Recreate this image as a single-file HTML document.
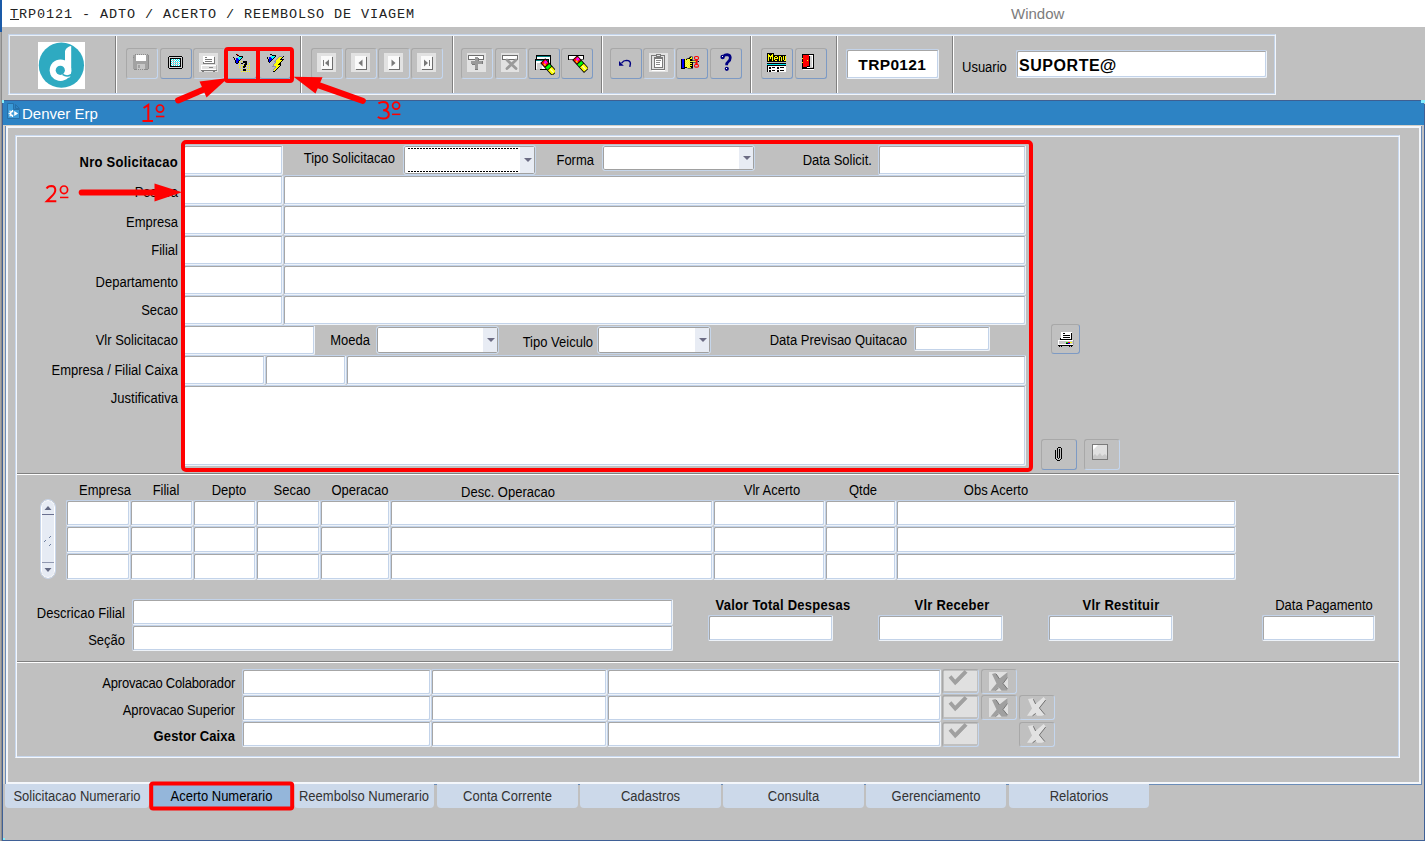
<!DOCTYPE html><html><head><meta charset="utf-8"><style>
*{margin:0;padding:0}
html,body{width:1425px;height:841px;overflow:hidden;background:#c0c0c0;position:relative;font-family:'Liberation Sans',sans-serif}
.t{position:absolute;white-space:nowrap}
.f{position:absolute;box-sizing:border-box;background:#fff;border:1px solid;border-color:#c3d3e9 #eef3f9 #eef3f9 #c3d3e9;box-shadow:inset 1px 1px 0 #a6a6a6,inset -1px -1px 0 #c3d3e9;border-radius:2px}
.cb{position:absolute;box-sizing:border-box;background:#fff;border:1px solid #c6d6ea;box-shadow:inset 0 0 0 1px #a0a0a0;border-radius:3px}
.cb .dd{position:absolute;right:1px;top:1px;bottom:1px;width:14px;background:#e8ecf4}
.cb .ar{position:absolute;left:4px;top:50%;margin-top:-2px;width:0;height:0;border-left:4px solid transparent;border-right:4px solid transparent;border-top:4px solid #6c6c84}
.cb .fc{position:absolute;left:4px;right:16px;top:2px;bottom:2px;background:repeating-linear-gradient(90deg,#000 0 2px,transparent 2px 3px) top/100% 1px no-repeat,repeating-linear-gradient(90deg,#000 0 2px,transparent 2px 3px) bottom/100% 1px no-repeat}
.tb{position:absolute;box-sizing:border-box;width:32px;height:31px;top:48px;border:1px solid;border-color:#a8a8a8 #c4d6ee #c4d6ee #a8a8a8;border-radius:3px}
.tb.en{border-color:#a8a8a8 #7d9ac4 #7d9ac4 #a8a8a8}
.sep{position:absolute;top:36px;height:57px;width:1px;background:#808080;border-right:1px solid #fff}
.tab{position:absolute;top:784px;height:24px;box-sizing:border-box;background:#ccd9ea;border-radius:0 0 4px 4px;color:#333;font-size:13px;line-height:13px;text-align:center}
.sb{position:absolute;box-sizing:border-box;border:1px solid;border-color:#a8a8a8 #c4d6ee #c4d6ee #a8a8a8;border-radius:3px}
</style></head><body><div style="position:absolute;left:0px;top:0px;width:1425px;height:27px;background:#fff"></div>
<div style="position:absolute;left:0px;top:0px;width:2px;height:32px;background:#1a5aa8"></div>
<div class="t" style="left:10px;top:8px;font-size:13.5px;line-height:13.5px;font-weight:normal;color:#222;font-family:'Liberation Mono',monospace;letter-spacing:0.9px"><span style="text-decoration:underline">T</span>RP0121 - ADTO / ACERTO / REEMBOLSO DE VIAGEM</div>
<div class="t" style="left:1011px;top:6px;font-size:15px;line-height:15px;font-weight:normal;color:#7c7c7c;font-family:'Liberation Sans',sans-serif;">Window</div>
<div style="position:absolute;left:0px;top:32px;width:1px;height:809px;background:#a8a8a8"></div>
<div style="position:absolute;left:1px;top:32px;width:1px;height:809px;background:#8c8c8c"></div>
<div style="position:absolute;left:8px;top:34px;width:1268px;height:61px;box-sizing:border-box;border:1px solid;border-color:#c3d3e9 #f2f6fb #f2f6fb #c3d3e9;box-shadow:inset 1px 1px 0 #eaf0f7,inset -1px -1px 0 #c3d3e9"></div>
<div class="sep" style="left:115px"></div>
<div class="sep" style="left:300px"></div>
<div class="sep" style="left:452px"></div>
<div class="sep" style="left:601px"></div>
<div class="sep" style="left:750px"></div>
<div class="sep" style="left:836px"></div>
<div class="sep" style="left:952px"></div>
<div style="position:absolute;left:38px;top:42px;width:47px;height:47px;background:#fff"></div>
<svg style="position:absolute;left:38px;top:42px" width="47" height="47" viewBox="0 0 47 47">
<circle cx="23.4" cy="23.2" r="22.6" fill="#2eaac1"/>
<circle cx="22.5" cy="28.2" r="10.8" fill="#fff"/>
<path d="M27,33 L27,9 Q28.5,4.8 33.2,4 L33.2,30 Q33.2,34 31,36 L27,33 Z" fill="#fff"/>
<circle cx="22.3" cy="28.3" r="4.6" fill="#2eaac1"/>
<path d="M24.5,32.4 Q29,35.5 33.5,32.5" stroke="#2eaac1" stroke-width="1.6" fill="none"/>
</svg>
<div class="tb" style="left:126px"></div>
<div class="tb en" style="left:160px"></div>
<div class="tb" style="left:193px"></div>
<div class="tb en" style="left:225px"></div>
<div class="tb en" style="left:259px"></div>
<div class="tb" style="left:311px"></div>
<div class="tb" style="left:345px"></div>
<div class="tb" style="left:378px"></div>
<div class="tb" style="left:411px"></div>
<div class="tb" style="left:461px"></div>
<div class="tb" style="left:495px"></div>
<div class="tb en" style="left:528px"></div>
<div class="tb en" style="left:561px"></div>
<div class="tb en" style="left:610px"></div>
<div class="tb" style="left:643px"></div>
<div class="tb en" style="left:676px"></div>
<div class="tb en" style="left:710px"></div>
<div class="tb en" style="left:761px"></div>
<div class="tb en" style="left:795px"></div>
<svg style="position:absolute;left:133px;top:54px" width="16" height="16" viewBox="0 0 16 16" shape-rendering="crispEdges"><rect x="0" y="1" width="16" height="14" fill="#a2a2a2"/><rect x="1" y="0" width="14" height="1" fill="#c0c0c0"/><rect x="2" y="0" width="1" height="1" fill="#8c8c8c"/><rect x="4" y="0" width="1" height="1" fill="#8c8c8c"/><rect x="6" y="0" width="1" height="1" fill="#8c8c8c"/><rect x="8" y="0" width="1" height="1" fill="#8c8c8c"/><rect x="10" y="0" width="1" height="1" fill="#8c8c8c"/><rect x="12" y="0" width="1" height="1" fill="#8c8c8c"/><rect x="14" y="0" width="1" height="1" fill="#8c8c8c"/><rect x="3" y="1" width="10" height="6" fill="#ffffff"/><rect x="15" y="1" width="1" height="14" fill="#8c8c8c"/><rect x="4" y="10" width="8" height="5" fill="#c6c6c6"/><rect x="5" y="11" width="2" height="3" fill="#a2a2a2"/><rect x="1" y="15" width="3" height="1" fill="#8c8c8c"/><rect x="5" y="15" width="1" height="1" fill="#8c8c8c"/><rect x="7" y="15" width="1" height="1" fill="#8c8c8c"/><rect x="9" y="15" width="1" height="1" fill="#8c8c8c"/><rect x="11" y="15" width="4" height="1" fill="#8c8c8c"/><rect x="0" y="3" width="1" height="1" fill="#8c8c8c"/></svg>
<svg style="position:absolute;left:168px;top:56px" width="15" height="13" viewBox="0 0 15 13" shape-rendering="crispEdges"><rect x="1" y="0" width="13" height="1" fill="#000"/><rect x="1" y="12" width="13" height="1" fill="#000"/><rect x="0" y="1" width="1" height="11" fill="#000"/><rect x="14" y="1" width="1" height="11" fill="#000"/><rect x="1" y="1" width="13" height="11" fill="#d4d4d4"/><rect x="2" y="2" width="11" height="9" fill="#000"/><rect x="3" y="3" width="9" height="7" fill="#ffffff"/><rect x="3" y="3" width="1" height="1" fill="#00e8f0"/><rect x="5" y="3" width="1" height="1" fill="#00e8f0"/><rect x="7" y="3" width="1" height="1" fill="#00e8f0"/><rect x="9" y="3" width="1" height="1" fill="#00e8f0"/><rect x="11" y="3" width="1" height="1" fill="#00e8f0"/><rect x="4" y="4" width="1" height="1" fill="#00e8f0"/><rect x="6" y="4" width="1" height="1" fill="#00e8f0"/><rect x="8" y="4" width="1" height="1" fill="#00e8f0"/><rect x="10" y="4" width="1" height="1" fill="#00e8f0"/><rect x="3" y="5" width="1" height="1" fill="#00e8f0"/><rect x="5" y="5" width="1" height="1" fill="#00e8f0"/><rect x="7" y="5" width="1" height="1" fill="#00e8f0"/><rect x="9" y="5" width="1" height="1" fill="#00e8f0"/><rect x="11" y="5" width="1" height="1" fill="#00e8f0"/><rect x="4" y="6" width="1" height="1" fill="#00e8f0"/><rect x="6" y="6" width="1" height="1" fill="#00e8f0"/><rect x="8" y="6" width="1" height="1" fill="#00e8f0"/><rect x="10" y="6" width="1" height="1" fill="#00e8f0"/><rect x="3" y="7" width="1" height="1" fill="#00e8f0"/><rect x="5" y="7" width="1" height="1" fill="#00e8f0"/><rect x="7" y="7" width="1" height="1" fill="#00e8f0"/><rect x="9" y="7" width="1" height="1" fill="#00e8f0"/><rect x="11" y="7" width="1" height="1" fill="#00e8f0"/><rect x="4" y="8" width="1" height="1" fill="#00e8f0"/><rect x="6" y="8" width="1" height="1" fill="#00e8f0"/><rect x="8" y="8" width="1" height="1" fill="#00e8f0"/><rect x="10" y="8" width="1" height="1" fill="#00e8f0"/><rect x="3" y="9" width="1" height="1" fill="#00e8f0"/><rect x="5" y="9" width="1" height="1" fill="#00e8f0"/><rect x="7" y="9" width="1" height="1" fill="#00e8f0"/><rect x="9" y="9" width="1" height="1" fill="#00e8f0"/><rect x="11" y="9" width="1" height="1" fill="#00e8f0"/><rect x="4" y="4" width="3" height="1" fill="#c8c8c8"/><rect x="4" y="6" width="7" height="1" fill="#c8c8c8"/><rect x="4" y="8" width="7" height="1" fill="#c8c8c8"/></svg>
<svg style="position:absolute;left:199px;top:53px" width="19" height="19" viewBox="0 0 19 19" shape-rendering="crispEdges"><rect x="0" y="0" width="19" height="19" fill="#e0e0e0"/><rect x="4" y="3" width="11" height="7" fill="#ffffff"/><rect x="6" y="4" width="2" height="1" fill="#7a7a7a"/><rect x="6" y="6" width="7" height="1" fill="#7a7a7a"/><rect x="6" y="8" width="7" height="1" fill="#7a7a7a"/><rect x="15" y="4" width="1" height="7" fill="#7a7a7a"/><rect x="4" y="10" width="12" height="1" fill="#7a7a7a"/><rect x="4" y="9" width="1" height="1" fill="#7a7a7a"/><rect x="2" y="12" width="16" height="5" fill="#ffffff"/><rect x="3" y="13" width="14" height="3" fill="#e2e2e2"/><rect x="10" y="14" width="4" height="1" fill="#8a8a8a"/><rect x="17" y="12" width="1" height="5" fill="#bdbdbd"/><rect x="2" y="17" width="16" height="1" fill="#7a7a7a"/><rect x="3" y="18" width="2" height="1" fill="#7a7a7a"/><rect x="14" y="18" width="2" height="1" fill="#7a7a7a"/></svg>
<svg style="position:absolute;left:229px;top:52px" width="24" height="24" viewBox="0 0 24 24" shape-rendering="crispEdges"><rect x="7" y="2" width="1" height="1" fill="#000000"/><rect x="8" y="2" width="1" height="1" fill="#ff0000"/><rect x="8" y="3" width="2" height="1" fill="#000000"/><rect x="10" y="4" width="4" height="1" fill="#000000"/><rect x="4" y="5" width="1" height="1" fill="#000000"/><rect x="9" y="5" width="4" height="1" fill="#00ffff"/><rect x="13" y="5" width="1" height="1" fill="#000000"/><rect x="5" y="6" width="1" height="1" fill="#000000"/><rect x="7" y="6" width="2" height="1" fill="#0000ff"/><rect x="9" y="6" width="3" height="1" fill="#00ffff"/><rect x="12" y="6" width="1" height="1" fill="#000000"/><rect x="5" y="7" width="1" height="1" fill="#000000"/><rect x="7" y="7" width="3" height="1" fill="#0000ff"/><rect x="10" y="7" width="1" height="1" fill="#00ffff"/><rect x="11" y="7" width="1" height="1" fill="#000000"/><rect x="6" y="8" width="1" height="1" fill="#000000"/><rect x="7" y="8" width="3" height="1" fill="#0000ff"/><rect x="10" y="8" width="1" height="1" fill="#000000"/><rect x="6" y="9" width="1" height="1" fill="#000000"/><rect x="7" y="9" width="2" height="1" fill="#0000ff"/><rect x="9" y="9" width="1" height="1" fill="#000000"/><rect x="6" y="10" width="1" height="1" fill="#000000"/><rect x="7" y="10" width="2" height="1" fill="#0000ff"/><rect x="9" y="10" width="1" height="1" fill="#000000"/><rect x="7" y="11" width="2" height="1" fill="#000000"/><rect x="14" y="9" width="4" height="1" fill="#000000"/><rect x="14" y="10" width="4" height="1" fill="#000000"/><rect x="12" y="11" width="2" height="1" fill="#000000"/><rect x="16" y="11" width="2" height="1" fill="#000000"/><rect x="15" y="12" width="3" height="1" fill="#000000"/><rect x="15" y="13" width="2" height="1" fill="#000000"/><rect x="14" y="14" width="3" height="1" fill="#000000"/><rect x="14" y="15" width="2" height="1" fill="#000000"/><rect x="14" y="17" width="3" height="1" fill="#000000"/><rect x="14" y="18" width="3" height="1" fill="#000000"/><rect x="10" y="9" width="1" height="1" fill="#ffff00"/><rect x="12" y="9" width="1" height="1" fill="#ffff00"/><rect x="10" y="11" width="1" height="1" fill="#ffff00"/><rect x="20" y="11" width="1" height="1" fill="#ffff00"/><rect x="10" y="13" width="1" height="1" fill="#ffff00"/><rect x="12" y="13" width="1" height="1" fill="#ffff00"/><rect x="14" y="13" width="1" height="1" fill="#ffff00"/><rect x="18" y="13" width="1" height="1" fill="#ffff00"/><rect x="20" y="13" width="1" height="1" fill="#ffff00"/><rect x="10" y="15" width="1" height="1" fill="#ffff00"/><rect x="12" y="15" width="1" height="1" fill="#ffff00"/><rect x="18" y="15" width="1" height="1" fill="#ffff00"/><rect x="20" y="15" width="1" height="1" fill="#ffff00"/><rect x="12" y="17" width="1" height="1" fill="#ffff00"/><rect x="18" y="17" width="1" height="1" fill="#ffff00"/><rect x="20" y="17" width="1" height="1" fill="#ffff00"/><rect x="12" y="19" width="1" height="1" fill="#ffff00"/><rect x="14" y="19" width="1" height="1" fill="#ffff00"/><rect x="16" y="19" width="1" height="1" fill="#ffff00"/><rect x="18" y="19" width="1" height="1" fill="#ffff00"/><rect x="20" y="19" width="1" height="1" fill="#ffff00"/></svg>
<svg style="position:absolute;left:263px;top:52px" width="24" height="24" viewBox="0 0 24 24" shape-rendering="crispEdges"><rect x="7" y="2" width="2" height="1" fill="#000000"/><rect x="9" y="3" width="4" height="1" fill="#000000"/><rect x="8" y="4" width="4" height="1" fill="#00ffff"/><rect x="12" y="4" width="1" height="1" fill="#000000"/><rect x="4" y="5" width="1" height="1" fill="#000000"/><rect x="6" y="5" width="2" height="1" fill="#0000ff"/><rect x="8" y="5" width="3" height="1" fill="#00ffff"/><rect x="11" y="5" width="1" height="1" fill="#000000"/><rect x="4" y="6" width="1" height="1" fill="#000000"/><rect x="6" y="6" width="3" height="1" fill="#0000ff"/><rect x="9" y="6" width="1" height="1" fill="#00ffff"/><rect x="10" y="6" width="1" height="1" fill="#000000"/><rect x="5" y="7" width="1" height="1" fill="#000000"/><rect x="6" y="7" width="3" height="1" fill="#0000ff"/><rect x="9" y="7" width="1" height="1" fill="#000000"/><rect x="5" y="8" width="1" height="1" fill="#000000"/><rect x="6" y="8" width="2" height="1" fill="#0000ff"/><rect x="8" y="8" width="1" height="1" fill="#000000"/><rect x="5" y="9" width="1" height="1" fill="#000000"/><rect x="6" y="9" width="1" height="1" fill="#0000ff"/><rect x="7" y="9" width="1" height="1" fill="#000000"/><rect x="6" y="10" width="1" height="1" fill="#000000"/><rect x="16" y="4" width="3" height="1" fill="#9090b0"/><rect x="15" y="5" width="1" height="1" fill="#9090b0"/><rect x="14" y="6" width="1" height="1" fill="#9090b0"/><rect x="13" y="7" width="1" height="1" fill="#9090b0"/><rect x="12" y="8" width="1" height="1" fill="#9090b0"/><rect x="11" y="9" width="4" height="1" fill="#9090b0"/><rect x="12" y="10" width="1" height="1" fill="#9090b0"/><rect x="11" y="11" width="1" height="1" fill="#9090b0"/><rect x="10" y="12" width="1" height="1" fill="#9090b0"/><rect x="10" y="13" width="1" height="1" fill="#9090b0"/><rect x="9" y="14" width="5" height="1" fill="#9090b0"/><rect x="12" y="15" width="1" height="1" fill="#9090b0"/><rect x="11" y="16" width="1" height="1" fill="#9090b0"/><rect x="10" y="17" width="1" height="1" fill="#9090b0"/><rect x="20" y="4" width="1" height="1" fill="#000000"/><rect x="16" y="5" width="3" height="1" fill="#ffff00"/><rect x="19" y="5" width="1" height="1" fill="#000000"/><rect x="15" y="6" width="3" height="1" fill="#ffff00"/><rect x="18" y="6" width="1" height="1" fill="#000000"/><rect x="14" y="7" width="3" height="1" fill="#ffff00"/><rect x="17" y="7" width="4" height="1" fill="#000000"/><rect x="13" y="8" width="6" height="1" fill="#ffff00"/><rect x="19" y="8" width="1" height="1" fill="#000000"/><rect x="13" y="9" width="5" height="1" fill="#ffff00"/><rect x="18" y="9" width="1" height="1" fill="#000000"/><rect x="13" y="10" width="4" height="1" fill="#ffff00"/><rect x="17" y="10" width="1" height="1" fill="#000000"/><rect x="12" y="11" width="4" height="1" fill="#ffff00"/><rect x="16" y="11" width="2" height="1" fill="#000000"/><rect x="11" y="12" width="4" height="1" fill="#ffff00"/><rect x="15" y="12" width="3" height="1" fill="#000000"/><rect x="11" y="13" width="6" height="1" fill="#ffff00"/><rect x="17" y="13" width="1" height="1" fill="#000000"/><rect x="13" y="14" width="3" height="1" fill="#ffff00"/><rect x="16" y="14" width="1" height="1" fill="#000000"/><rect x="13" y="15" width="2" height="1" fill="#ffff00"/><rect x="15" y="15" width="1" height="1" fill="#000000"/><rect x="12" y="16" width="2" height="1" fill="#ffff00"/><rect x="14" y="16" width="1" height="1" fill="#000000"/><rect x="11" y="17" width="2" height="1" fill="#ffff00"/><rect x="13" y="17" width="1" height="1" fill="#000000"/><rect x="11" y="18" width="1" height="1" fill="#ffff00"/><rect x="12" y="18" width="1" height="1" fill="#000000"/><rect x="10" y="19" width="2" height="1" fill="#000000"/></svg>
<svg style="position:absolute;left:317px;top:53px" width="19" height="19" viewBox="0 0 19 19"><rect x="0" y="0" width="19" height="19" fill="#e2e2e2"/><rect x="4" y="3" width="11" height="13" fill="#fafafa"/><rect x="15" y="4" width="1" height="13" fill="#6e6e6e"/><rect x="5" y="16" width="11" height="1" fill="#6e6e6e"/><rect x="6" y="7" width="1" height="6" fill="#787878"/><polygon points="8,10 12,6.6 12,13.4" fill="#787878" /></svg>
<svg style="position:absolute;left:351px;top:53px" width="19" height="19" viewBox="0 0 19 19"><rect x="0" y="0" width="19" height="19" fill="#e2e2e2"/><rect x="4" y="3" width="11" height="13" fill="#fafafa"/><rect x="15" y="4" width="1" height="13" fill="#6e6e6e"/><rect x="5" y="16" width="11" height="1" fill="#6e6e6e"/><polygon points="7.5,10 11.5,6.6 11.5,13.4" fill="#787878" /></svg>
<svg style="position:absolute;left:384px;top:53px" width="19" height="19" viewBox="0 0 19 19"><rect x="0" y="0" width="19" height="19" fill="#e2e2e2"/><rect x="4" y="3" width="11" height="13" fill="#fafafa"/><rect x="15" y="4" width="1" height="13" fill="#6e6e6e"/><rect x="5" y="16" width="11" height="1" fill="#6e6e6e"/><polygon points="11.5,10 7.5,6.6 7.5,13.4" fill="#787878" /></svg>
<svg style="position:absolute;left:417px;top:53px" width="19" height="19" viewBox="0 0 19 19"><rect x="0" y="0" width="19" height="19" fill="#e2e2e2"/><rect x="4" y="3" width="11" height="13" fill="#fafafa"/><rect x="15" y="4" width="1" height="13" fill="#6e6e6e"/><rect x="5" y="16" width="11" height="1" fill="#6e6e6e"/><polygon points="11,10 7,6.6 7,13.4" fill="#787878" /><rect x="12" y="7" width="1" height="6" fill="#787878"/></svg>
<svg style="position:absolute;left:467px;top:53px" width="19" height="19" viewBox="0 0 19 19" shape-rendering="crispEdges"><rect x="0" y="0" width="19" height="19" fill="#e2e2e2"/><rect x="1" y="2" width="16" height="5" fill="#6e6e6e"/><rect x="2" y="3" width="14" height="3" fill="#ffffff"/><rect x="8" y="4" width="3" height="12" fill="#9a9a9a"/><rect x="4" y="8" width="11" height="3" fill="#9a9a9a"/><rect x="11" y="5" width="1" height="3" fill="#7a7a7a"/><rect x="15" y="8" width="1" height="3" fill="#7a7a7a"/><rect x="8" y="16" width="3" height="1" fill="#7a7a7a"/><rect x="5" y="11" width="3" height="1" fill="#7a7a7a"/></svg>
<svg style="position:absolute;left:501px;top:53px" width="18" height="19" viewBox="0 0 18 19"><rect x="0" y="0" width="18" height="19" fill="#e2e2e2"/><rect x="1" y="2" width="16" height="5" fill="#6e6e6e"/><rect x="2" y="3" width="14" height="3" fill="#ffffff"/><path d="M6,7 L15,15.5 M15,7 L6,15.5" stroke="#9a9a9a" stroke-width="2.8" stroke-linecap="round"/></svg>
<svg style="position:absolute;left:533px;top:53px" width="22" height="22" viewBox="0 0 22 22"><rect x="3" y="2" width="15" height="11" fill="#000"/><rect x="4" y="3" width="13" height="1" fill="#008080"/><rect x="4" y="4" width="13" height="8" fill="#ffffff"/><rect x="2" y="6" width="14" height="11" fill="#000"/><rect x="3" y="7" width="12" height="1" fill="#008080"/><rect x="3" y="8" width="12" height="8" fill="#ffffff"/><rect x="4" y="10" width="5" height="6" fill="#d0d0d0"/><rect x="3" y="16" width="4" height="1" fill="#c0c0c0"/><g transform="translate(10.3,8.2) rotate(48)"><rect x="-0.8" y="-3.4000000000000004" width="17.6" height="6.800000000000001" fill="#000"/><rect x="0" y="-2.6" width="5.2" height="5.2" fill="#ff0000"/><rect x="1.0" y="-2.6" width="2.6" height="3.0" fill="#ff00ff"/><rect x="2.2" y="0.6" width="1.3" height="1.3" fill="#ffff00"/><rect x="3.6" y="0.6" width="1.0" height="1.3" fill="#ffff00"/><rect x="6.0" y="-2.6" width="3.0" height="5.2" fill="#00ff00"/><rect x="9.8" y="-2.6" width="6.199999999999999" height="5.2" fill="#ffff00"/><rect x="10.5" y="-0.6" width="5" height="1.2" fill="#ffffb0"/></g></svg>
<svg style="position:absolute;left:566px;top:53px" width="22" height="22" viewBox="0 0 22 22"><rect x="2" y="2" width="16" height="5" fill="#000"/><rect x="3" y="3" width="14" height="3" fill="#ffffff"/><rect x="3" y="6" width="15" height="1" fill="#606060"/><g transform="translate(9.3,5.2) rotate(48)"><rect x="-0.8" y="-3.4000000000000004" width="17.6" height="6.800000000000001" fill="#000"/><rect x="0" y="-2.6" width="5.2" height="5.2" fill="#ff0000"/><rect x="1.0" y="-2.6" width="2.6" height="3.0" fill="#ff00ff"/><rect x="2.2" y="0.6" width="1.3" height="1.3" fill="#ffff00"/><rect x="3.6" y="0.6" width="1.0" height="1.3" fill="#ffff00"/><rect x="6.0" y="-2.6" width="3.0" height="5.2" fill="#00ff00"/><rect x="9.8" y="-2.6" width="6.199999999999999" height="5.2" fill="#ffff00"/><rect x="10.5" y="-0.6" width="5" height="1.2" fill="#ffffb0"/></g></svg>
<svg style="position:absolute;left:612px;top:50px" width="24" height="24" viewBox="0 0 24 24"><polygon points="7,11 7,15.8 11.8,15.8" fill="#000080" /><path d="M9.6,13.2 Q11.5,10.4 14.5,10.4 Q18.4,10.6 18.4,13.6 L17.8,16.8" stroke="#000080" stroke-width="1.4" fill="none"/></svg>
<svg style="position:absolute;left:649px;top:53px" width="19" height="19" viewBox="0 0 19 19" shape-rendering="crispEdges"><rect x="0" y="0" width="19" height="19" fill="#e2e2e2"/><rect x="2" y="2" width="14" height="15" fill="#7a7a7a"/><rect x="3" y="3" width="12" height="13" fill="#e2e2e2"/><rect x="3" y="16" width="13" height="1" fill="#7a7a7a"/><rect x="3" y="17" width="13" height="1" fill="#ffffff"/><rect x="5" y="4" width="9" height="11" fill="#7a7a7a"/><rect x="6" y="6" width="7" height="8" fill="#ffffff"/><rect x="7" y="1" width="5" height="3" fill="#7a7a7a"/><rect x="8" y="2" width="3" height="1" fill="#e2e2e2"/><rect x="7" y="7" width="5" height="1" fill="#8a8a8a"/><rect x="7" y="9" width="4" height="1" fill="#8a8a8a"/><rect x="7" y="11" width="4" height="1" fill="#8a8a8a"/></svg>
<svg style="position:absolute;left:680px;top:54px" width="20" height="18" viewBox="0 0 20 18"><rect x="1" y="5" width="4" height="10" fill="#000"/><rect x="2" y="5" width="2" height="9" fill="#0000ff"/><polygon points="5,6 7,4.5 9,4 10,2.5 12.5,2.5 12.5,6.5 17.5,6.5 17.5,8.5 13,8.5 13,14.5 8,14.5 5,12.5" fill="#000" /><rect x="5" y="5" width="1" height="1" fill="#ffff00"/><rect x="6" y="5" width="1" height="1" fill="#e8e870"/><rect x="7" y="5" width="1" height="1" fill="#ffff00"/><rect x="8" y="5" width="1" height="1" fill="#e8e870"/><rect x="9" y="5" width="1" height="1" fill="#ffff00"/><rect x="5" y="6" width="1" height="1" fill="#e8e870"/><rect x="6" y="6" width="1" height="1" fill="#ffff00"/><rect x="7" y="6" width="1" height="1" fill="#e8e870"/><rect x="8" y="6" width="1" height="1" fill="#ffff00"/><rect x="9" y="6" width="1" height="1" fill="#e8e870"/><rect x="5" y="7" width="1" height="1" fill="#ffff00"/><rect x="6" y="7" width="1" height="1" fill="#e8e870"/><rect x="7" y="7" width="1" height="1" fill="#ffff00"/><rect x="8" y="7" width="1" height="1" fill="#e8e870"/><rect x="9" y="7" width="1" height="1" fill="#ffff00"/><rect x="5" y="8" width="1" height="1" fill="#e8e870"/><rect x="6" y="8" width="1" height="1" fill="#ffff00"/><rect x="7" y="8" width="1" height="1" fill="#e8e870"/><rect x="8" y="8" width="1" height="1" fill="#ffff00"/><rect x="9" y="8" width="1" height="1" fill="#e8e870"/><rect x="5" y="9" width="1" height="1" fill="#ffff00"/><rect x="6" y="9" width="1" height="1" fill="#e8e870"/><rect x="7" y="9" width="1" height="1" fill="#ffff00"/><rect x="8" y="9" width="1" height="1" fill="#e8e870"/><rect x="9" y="9" width="1" height="1" fill="#ffff00"/><rect x="5" y="10" width="1" height="1" fill="#e8e870"/><rect x="6" y="10" width="1" height="1" fill="#ffff00"/><rect x="7" y="10" width="1" height="1" fill="#e8e870"/><rect x="8" y="10" width="1" height="1" fill="#ffff00"/><rect x="9" y="10" width="1" height="1" fill="#e8e870"/><rect x="5" y="11" width="1" height="1" fill="#ffff00"/><rect x="6" y="11" width="1" height="1" fill="#e8e870"/><rect x="7" y="11" width="1" height="1" fill="#ffff00"/><rect x="8" y="11" width="1" height="1" fill="#e8e870"/><rect x="9" y="11" width="1" height="1" fill="#ffff00"/><rect x="5" y="12" width="1" height="1" fill="#e8e870"/><rect x="6" y="12" width="1" height="1" fill="#ffff00"/><rect x="7" y="12" width="1" height="1" fill="#e8e870"/><rect x="8" y="12" width="1" height="1" fill="#ffff00"/><rect x="9" y="12" width="1" height="1" fill="#e8e870"/><rect x="5" y="13" width="1" height="1" fill="#ffff00"/><rect x="6" y="13" width="1" height="1" fill="#e8e870"/><rect x="7" y="13" width="1" height="1" fill="#ffff00"/><rect x="8" y="13" width="1" height="1" fill="#e8e870"/><rect x="9" y="13" width="1" height="1" fill="#ffff00"/><rect x="10" y="7" width="6" height="1" fill="#ffff00"/><rect x="11" y="7" width="1" height="1" fill="#d0d0a0"/><rect x="13" y="7" width="1" height="1" fill="#d0d0a0"/><rect x="10" y="9" width="2" height="1" fill="#ffff00"/><rect x="10" y="11" width="2" height="1" fill="#ffff00"/><rect x="9" y="13" width="2" height="1" fill="#ffff00"/><rect x="10" y="4" width="2" height="1" fill="#ffff00"/><rect x="11" y="3" width="1" height="1" fill="#ffff00"/><rect x="6" y="5" width="1" height="1" fill="#000"/><rect x="5" y="13" width="2" height="1" fill="#000"/><g fill="none" stroke="#ff0000" stroke-width="1.1"><rect x="14.5" y="2.5" width="4" height="3" rx="1.2"/><rect x="14.5" y="10.5" width="4" height="2.6" rx="1.2"/><path d="M15.5,5.5 L17.5,10.5 M17.5,5.5 L15.5,10.5"/></g><rect x="18" y="7" width="1" height="1" fill="#000"/></svg>
<svg style="position:absolute;left:720px;top:53px" width="13" height="19" viewBox="0 0 13 19"><path d="M3.2,3.4 Q5,1.6 7.2,1.6 Q10.3,1.8 10.3,4.8 Q10.3,7.2 8.3,8.6 Q6.6,9.8 6.6,12.3" stroke="#000080" stroke-width="2.7" fill="none"/><circle cx="2.6" cy="4" r="2.2" fill="#000080"/><circle cx="6.8" cy="15.8" r="2.1" fill="#000080"/><rect x="2" y="3" width="1" height="1" fill="#ffffff"/><rect x="6" y="15" width="1" height="1" fill="#ffffff"/></svg>
<svg style="position:absolute;left:767px;top:53px" width="19" height="19" viewBox="0 0 19 19" shape-rendering="crispEdges"><rect x="0" y="0" width="7" height="9" fill="#000"/><rect x="7" y="2" width="12" height="7" fill="#000"/><rect x="1" y="1" width="1" height="7" fill="#ffff00"/><rect x="5" y="1" width="1" height="7" fill="#ffff00"/><rect x="2" y="2" width="1" height="2" fill="#ffff00"/><rect x="3" y="3" width="1" height="3" fill="#ffff00"/><rect x="4" y="2" width="1" height="2" fill="#ffff00"/><rect x="8" y="3" width="2" height="1" fill="#ffff00"/><rect x="7" y="4" width="1" height="1" fill="#ffff00"/><rect x="10" y="4" width="1" height="1" fill="#ffff00"/><rect x="7" y="5" width="4" height="1" fill="#ffff00"/><rect x="7" y="6" width="1" height="1" fill="#ffff00"/><rect x="8" y="7" width="2" height="1" fill="#ffff00"/><rect x="12" y="3" width="1" height="5" fill="#ffff00"/><rect x="13" y="3" width="1" height="1" fill="#ffff00"/><rect x="14" y="4" width="1" height="4" fill="#ffff00"/><rect x="16" y="3" width="1" height="4" fill="#ffff00"/><rect x="18" y="3" width="1" height="5" fill="#ffff00"/><rect x="17" y="7" width="1" height="1" fill="#ffff00"/><rect x="0" y="10" width="19" height="1" fill="#000"/><rect x="0" y="11" width="19" height="1" fill="#00e8f0"/><rect x="0" y="12" width="19" height="1" fill="#000"/><rect x="0" y="12" width="1" height="7" fill="#000"/><rect x="1" y="13" width="18" height="6" fill="#ffffff"/><rect x="2" y="14" width="2" height="2" fill="#000"/><rect x="5" y="14" width="3" height="1" fill="#000"/><rect x="10" y="14" width="2" height="2" fill="#000"/><rect x="13" y="14" width="4" height="1" fill="#000"/><rect x="2" y="17" width="2" height="2" fill="#000"/><rect x="5" y="17" width="3" height="1" fill="#000"/><rect x="10" y="17" width="2" height="2" fill="#000"/><rect x="13" y="17" width="4" height="1" fill="#000"/></svg>
<svg style="position:absolute;left:802px;top:54px" width="12" height="16" viewBox="0 0 12 16"><rect x="0" y="0" width="12" height="15" fill="#000"/><rect x="1" y="1" width="10" height="13" fill="#ffffff"/><rect x="8" y="2" width="2" height="11" fill="#d0d0d0"/><rect x="7" y="2" width="1" height="11" fill="#000"/><polygon points="1,1 7,1 7,12 5,12 5,13.5 1,13.5" fill="#ff0000" /><rect x="1" y="13" width="4" height="1" fill="#000"/><rect x="5" y="12" width="3" height="1" fill="#000"/><rect x="8" y="13" width="3" height="1" fill="#c0c0c0"/><rect x="5" y="6" width="1" height="1" fill="#ffff00"/><rect x="0" y="4" width="1" height="1" fill="#ffff00"/><rect x="0" y="8" width="1" height="1" fill="#ffff00"/><rect x="1" y="15" width="11" height="1" fill="#ffffff"/></svg>
<div class="f" style="left:846px;top:49px;width:93px;height:30px;"></div>
<div class="t" style="left:845.8px;width:93px;text-align:center;top:57px;font-size:15.5px;line-height:15.5px;font-weight:bold;color:#000;font-family:'Liberation Sans',sans-serif;letter-spacing:0.35px">TRP0121</div>
<div class="t" style="left:962px;top:61px;font-size:13px;line-height:13px;font-weight:normal;color:#000;font-family:'Liberation Sans',sans-serif;transform:scaleY(1.1);transform-origin:0 11px;">Usuario</div>
<div class="f" style="left:1016px;top:50px;width:251px;height:28px;"></div>
<div class="t" style="left:1019px;top:58px;font-size:16px;line-height:16px;font-weight:bold;color:#000;font-family:'Liberation Sans',sans-serif;letter-spacing:0.55px">SUPORT<span style="letter-spacing:0">E</span><span style="font-size:17px">@</span></div>
<div style="position:absolute;left:2px;top:100px;width:1422px;height:25px;background:#2d83c4;border-top:1px solid #3e5f92;box-sizing:border-box"></div>
<div style="position:absolute;left:2px;top:100px;width:2px;height:3px;background:#86eefc"></div>
<div style="position:absolute;left:1421px;top:100px;width:4px;height:3px;background:#86eefc"></div>
<div style="position:absolute;left:2px;top:838px;width:3px;height:3px;background:#86eefc"></div>
<svg style="position:absolute;left:7px;top:103px" width="13" height="16" viewBox="0 0 13 16"><path d="M0.5,0.5 H6.5 V6.5 H12.5 V15.5 H0.5 Z" fill="#3a9ad8" stroke="#2670a8" stroke-width="1"/><path d="M8.5,1.5 L8.5,5.5 L12.5,5.5 Z" fill="#2d83c4" stroke="#2670a8" stroke-width="1"/><defs><clipPath id="gc"><rect x="0" y="0" width="6.2" height="16"/></clipPath></defs><g clip-path="url(#gc)"><circle cx="5.6" cy="10.5" r="2.1" fill="none" stroke="#fff" stroke-width="1.7"/><rect x="1.6" y="9.8" width="1.4" height="1.4" fill="#fff"/><rect x="5" y="7" width="1.4" height="1.4" fill="#fff"/><rect x="5" y="12.6" width="1.4" height="1.4" fill="#fff"/><rect x="2.4" y="7.6" width="1.3" height="1.3" fill="#fff"/><rect x="2.4" y="12.1" width="1.3" height="1.3" fill="#fff"/></g><polygon points="7.2,7.9 11.2,10.5 7.2,13.1" fill="#fff"/></svg>
<div class="t" style="left:22px;top:106px;font-size:15px;line-height:15px;font-weight:normal;color:#fff;font-family:'Liberation Sans',sans-serif;">Denver Erp</div>
<div style="position:absolute;left:2px;top:103px;width:1px;height:738px;background:#3f6096"></div>
<div style="position:absolute;left:1424px;top:104px;width:1px;height:737px;background:#3f6096"></div>
<div style="position:absolute;left:2px;top:840px;width:1423px;height:1px;background:#3f6096"></div>
<div style="position:absolute;left:3px;top:125px;width:2px;height:659px;background:#d4d0c8"></div>
<div style="position:absolute;left:3px;top:125px;width:1419px;height:1px;background:#d4d0c8"></div>
<div style="position:absolute;left:6px;top:126px;width:1415px;height:658px;box-sizing:border-box;border:2px solid #f4f7fb"></div>
<div style="position:absolute;left:5px;top:126px;width:1px;height:659px;background:#6a8cb8"></div>
<div style="position:absolute;left:1421px;top:126px;width:1px;height:659px;background:#6a8cb8"></div>
<div style="position:absolute;left:5px;top:784px;width:1417px;height:1px;background:#6a8cb8"></div>
<div style="position:absolute;left:15px;top:135px;width:1385px;height:623px;box-sizing:border-box;border:1px solid;border-color:#c8d8ee #f4f7fc #f4f7fc #c8d8ee;box-shadow:inset 1px 1px 0 #f4f7fc,inset -1px -1px 0 #c8d8ee"></div>
<div style="position:absolute;left:17px;top:473px;width:1382px;height:1px;background:#808080"></div>
<div style="position:absolute;left:17px;top:474px;width:1382px;height:1px;background:#fff"></div>
<div style="position:absolute;left:17px;top:661px;width:1382px;height:1px;background:#808080"></div>
<div style="position:absolute;left:17px;top:662px;width:1382px;height:1px;background:#fff"></div>
<div class="t" style="right:1247px;top:156px;font-size:13px;line-height:13px;font-weight:bold;color:#000;font-family:'Liberation Sans',sans-serif;transform:scaleY(1.1);transform-origin:0 11px;letter-spacing:0.25px;">Nro Solicitacao</div>
<div class="t" style="right:1247px;top:186px;font-size:13px;line-height:13px;font-weight:normal;color:#000;font-family:'Liberation Sans',sans-serif;transform:scaleY(1.1);transform-origin:0 11px;">Pessoa</div>
<div class="t" style="right:1247px;top:216px;font-size:13px;line-height:13px;font-weight:normal;color:#000;font-family:'Liberation Sans',sans-serif;transform:scaleY(1.1);transform-origin:0 11px;">Empresa</div>
<div class="t" style="right:1247px;top:244px;font-size:13px;line-height:13px;font-weight:normal;color:#000;font-family:'Liberation Sans',sans-serif;transform:scaleY(1.1);transform-origin:0 11px;">Filial</div>
<div class="t" style="right:1247px;top:276px;font-size:13px;line-height:13px;font-weight:normal;color:#000;font-family:'Liberation Sans',sans-serif;transform:scaleY(1.1);transform-origin:0 11px;">Departamento</div>
<div class="t" style="right:1247px;top:304px;font-size:13px;line-height:13px;font-weight:normal;color:#000;font-family:'Liberation Sans',sans-serif;transform:scaleY(1.1);transform-origin:0 11px;">Secao</div>
<div class="t" style="right:1247px;top:334px;font-size:13px;line-height:13px;font-weight:normal;color:#000;font-family:'Liberation Sans',sans-serif;transform:scaleY(1.1);transform-origin:0 11px;">Vlr Solicitacao</div>
<div class="t" style="right:1247px;top:364px;font-size:13px;line-height:13px;font-weight:normal;color:#000;font-family:'Liberation Sans',sans-serif;transform:scaleY(1.1);transform-origin:0 11px;">Empresa / Filial Caixa</div>
<div class="t" style="right:1247px;top:392px;font-size:13px;line-height:13px;font-weight:normal;color:#000;font-family:'Liberation Sans',sans-serif;transform:scaleY(1.1);transform-origin:0 11px;">Justificativa</div>
<div class="f" style="left:183px;top:145px;width:100px;height:30px;"></div>
<div class="t" style="right:1030px;top:152px;font-size:13px;line-height:13px;font-weight:normal;color:#000;font-family:'Liberation Sans',sans-serif;transform:scaleY(1.1);transform-origin:0 11px;">Tipo Solicitacao</div>
<div class="cb" style="left:403px;top:145px;width:133px;height:30px"><div class="dd"><div class="ar"></div></div><div class="fc"></div></div>
<div class="t" style="right:831px;top:154px;font-size:13px;line-height:13px;font-weight:normal;color:#000;font-family:'Liberation Sans',sans-serif;transform:scaleY(1.1);transform-origin:0 11px;">Forma</div>
<div class="cb" style="left:602px;top:145px;width:153px;height:26px"><div class="dd"><div class="ar"></div></div></div>
<div class="t" style="right:553px;top:154px;font-size:13px;line-height:13px;font-weight:normal;color:#000;font-family:'Liberation Sans',sans-serif;transform:scaleY(1.1);transform-origin:0 11px;">Data Solicit.</div>
<div class="f" style="left:878px;top:145px;width:148px;height:30px;"></div>
<div class="f" style="left:183px;top:175px;width:100px;height:30px;"></div>
<div class="f" style="left:283px;top:175px;width:743px;height:30px;"></div>
<div class="f" style="left:183px;top:205px;width:100px;height:30px;"></div>
<div class="f" style="left:283px;top:205px;width:743px;height:30px;"></div>
<div class="f" style="left:183px;top:235px;width:100px;height:30px;"></div>
<div class="f" style="left:283px;top:235px;width:743px;height:30px;"></div>
<div class="f" style="left:183px;top:265px;width:100px;height:30px;"></div>
<div class="f" style="left:283px;top:265px;width:743px;height:30px;"></div>
<div class="f" style="left:183px;top:295px;width:100px;height:30px;"></div>
<div class="f" style="left:283px;top:295px;width:743px;height:30px;"></div>
<div class="f" style="left:183px;top:325px;width:132px;height:30px;"></div>
<div class="t" style="right:1055px;top:334px;font-size:13px;line-height:13px;font-weight:normal;color:#000;font-family:'Liberation Sans',sans-serif;transform:scaleY(1.1);transform-origin:0 11px;">Moeda</div>
<div class="cb" style="left:376px;top:326px;width:123px;height:28px"><div class="dd"><div class="ar"></div></div></div>
<div class="t" style="right:832px;top:336px;font-size:13px;line-height:13px;font-weight:normal;color:#000;font-family:'Liberation Sans',sans-serif;transform:scaleY(1.1);transform-origin:0 11px;">Tipo Veiculo</div>
<div class="cb" style="left:597px;top:326px;width:114px;height:28px"><div class="dd"><div class="ar"></div></div></div>
<div class="t" style="right:518px;top:334px;font-size:13px;line-height:13px;font-weight:normal;color:#000;font-family:'Liberation Sans',sans-serif;transform:scaleY(1.1);transform-origin:0 11px;">Data Previsao Quitacao</div>
<div class="f" style="left:914px;top:326px;width:76px;height:25px;"></div>
<div class="f" style="left:183px;top:355px;width:82px;height:30px;"></div>
<div class="f" style="left:265px;top:355px;width:81px;height:30px;"></div>
<div class="f" style="left:346px;top:355px;width:680px;height:30px;"></div>
<div class="f" style="left:183px;top:385px;width:843px;height:81px;"></div>
<div class="sb" style="left:1051px;top:324px;width:29px;height:30px;border-color:#a8a8a8 #7d9ac4 #7d9ac4 #a8a8a8"></div>
<svg style="position:absolute;left:1058px;top:332px" width="16" height="15" viewBox="0 0 16 15" shape-rendering="crispEdges"><rect x="3" y="0" width="11" height="7" fill="#ffffff"/><rect x="13" y="1" width="1" height="7" fill="#000"/><rect x="2" y="7" width="12" height="1" fill="#000"/><rect x="2" y="6" width="1" height="1" fill="#000"/><rect x="5" y="1" width="2" height="1" fill="#000"/><rect x="5" y="3" width="7" height="1" fill="#000"/><rect x="5" y="5" width="7" height="1" fill="#000"/><rect x="0" y="8" width="16" height="5" fill="#ffffff"/><rect x="1" y="9" width="14" height="3" fill="#c8c8c8"/><rect x="15" y="8" width="1" height="5" fill="#a0a0a0"/><rect x="8" y="10" width="2" height="1" fill="#00e000"/><rect x="10" y="10" width="2" height="1" fill="#ff0000"/><rect x="12" y="10" width="2" height="1" fill="#ffff00"/><rect x="8" y="11" width="2" height="1" fill="#000"/><rect x="10" y="11" width="2" height="1" fill="#0000ff"/><rect x="0" y="13" width="15" height="1" fill="#000"/><rect x="1" y="14" width="1" height="1" fill="#000"/><rect x="3" y="14" width="1" height="1" fill="#000"/><rect x="11" y="14" width="1" height="1" fill="#000"/><rect x="13" y="14" width="1" height="1" fill="#000"/></svg>
<div class="sb" style="left:1041px;top:439px;width:36px;height:31px;border-color:#a8a8a8 #7d9ac4 #7d9ac4 #a8a8a8"></div>
<svg style="position:absolute;left:1050px;top:444px" width="18" height="20" viewBox="0 0 18 20" shape-rendering="crispEdges"><rect x="8" y="3" width="3" height="1" fill="#000000"/><rect x="7" y="4" width="1" height="1" fill="#000000"/><rect x="11" y="4" width="1" height="1" fill="#000000"/><rect x="7" y="5" width="1" height="1" fill="#000000"/><rect x="9" y="5" width="1" height="1" fill="#000000"/><rect x="11" y="5" width="1" height="1" fill="#000000"/><rect x="5" y="6" width="1" height="1" fill="#000000"/><rect x="7" y="6" width="1" height="1" fill="#000000"/><rect x="9" y="6" width="1" height="1" fill="#000000"/><rect x="11" y="6" width="1" height="1" fill="#000000"/><rect x="5" y="7" width="1" height="1" fill="#000000"/><rect x="7" y="7" width="1" height="1" fill="#000000"/><rect x="9" y="7" width="1" height="1" fill="#000000"/><rect x="11" y="7" width="1" height="1" fill="#000000"/><rect x="5" y="8" width="1" height="1" fill="#000000"/><rect x="7" y="8" width="1" height="1" fill="#000000"/><rect x="9" y="8" width="1" height="1" fill="#000000"/><rect x="11" y="8" width="1" height="1" fill="#000000"/><rect x="5" y="9" width="1" height="1" fill="#000000"/><rect x="7" y="9" width="1" height="1" fill="#000000"/><rect x="9" y="9" width="1" height="1" fill="#000000"/><rect x="11" y="9" width="1" height="1" fill="#000000"/><rect x="5" y="10" width="1" height="1" fill="#000000"/><rect x="7" y="10" width="1" height="1" fill="#000000"/><rect x="9" y="10" width="1" height="1" fill="#000000"/><rect x="11" y="10" width="1" height="1" fill="#000000"/><rect x="5" y="11" width="1" height="1" fill="#000000"/><rect x="7" y="11" width="1" height="1" fill="#000000"/><rect x="9" y="11" width="1" height="1" fill="#000000"/><rect x="11" y="11" width="1" height="1" fill="#000000"/><rect x="5" y="12" width="1" height="1" fill="#000000"/><rect x="7" y="12" width="1" height="1" fill="#000000"/><rect x="9" y="12" width="1" height="1" fill="#000000"/><rect x="11" y="12" width="1" height="1" fill="#000000"/><rect x="5" y="13" width="1" height="1" fill="#000000"/><rect x="7" y="13" width="1" height="1" fill="#000000"/><rect x="9" y="13" width="1" height="1" fill="#000000"/><rect x="11" y="13" width="1" height="1" fill="#000000"/><rect x="5" y="14" width="1" height="1" fill="#000000"/><rect x="8" y="14" width="1" height="1" fill="#000000"/><rect x="11" y="14" width="1" height="1" fill="#000000"/><rect x="6" y="15" width="1" height="1" fill="#000000"/><rect x="10" y="15" width="1" height="1" fill="#000000"/><rect x="7" y="16" width="3" height="1" fill="#000000"/></svg>
<div class="sb" style="left:1084px;top:439px;width:36px;height:31px"></div>
<svg style="position:absolute;left:1092px;top:444px" width="16" height="16" viewBox="0 0 16 16"><rect x="0" y="0" width="16" height="16" fill="#7a7a7a"/><rect x="1" y="1" width="14" height="14" fill="#e0e0e0"/><polygon points="1,1 6,1 1,6" fill="#ffffff" /><polygon points="1,12 3,10 5,12 8,9 10,12 13,10 15,12 15,15 1,15" fill="#c8c8c8" /></svg>
<div class="t" style="left:5.0px;width:200px;text-align:center;top:484px;font-size:13px;line-height:13px;font-weight:normal;color:#000;font-family:'Liberation Sans',sans-serif;transform:scaleY(1.1);transform-origin:0 11px;">Empresa</div>
<div class="t" style="left:66.0px;width:200px;text-align:center;top:484px;font-size:13px;line-height:13px;font-weight:normal;color:#000;font-family:'Liberation Sans',sans-serif;transform:scaleY(1.1);transform-origin:0 11px;">Filial</div>
<div class="t" style="left:129.0px;width:200px;text-align:center;top:484px;font-size:13px;line-height:13px;font-weight:normal;color:#000;font-family:'Liberation Sans',sans-serif;transform:scaleY(1.1);transform-origin:0 11px;">Depto</div>
<div class="t" style="left:192.0px;width:200px;text-align:center;top:484px;font-size:13px;line-height:13px;font-weight:normal;color:#000;font-family:'Liberation Sans',sans-serif;transform:scaleY(1.1);transform-origin:0 11px;">Secao</div>
<div class="t" style="left:260.0px;width:200px;text-align:center;top:484px;font-size:13px;line-height:13px;font-weight:normal;color:#000;font-family:'Liberation Sans',sans-serif;transform:scaleY(1.1);transform-origin:0 11px;">Operacao</div>
<div class="t" style="left:408.0px;width:200px;text-align:center;top:486px;font-size:13px;line-height:13px;font-weight:normal;color:#000;font-family:'Liberation Sans',sans-serif;transform:scaleY(1.1);transform-origin:0 11px;">Desc. Operacao</div>
<div class="t" style="left:672.0px;width:200px;text-align:center;top:484px;font-size:13px;line-height:13px;font-weight:normal;color:#000;font-family:'Liberation Sans',sans-serif;transform:scaleY(1.1);transform-origin:0 11px;">Vlr Acerto</div>
<div class="t" style="left:763.0px;width:200px;text-align:center;top:484px;font-size:13px;line-height:13px;font-weight:normal;color:#000;font-family:'Liberation Sans',sans-serif;transform:scaleY(1.1);transform-origin:0 11px;">Qtde</div>
<div class="t" style="left:896.0px;width:200px;text-align:center;top:484px;font-size:13px;line-height:13px;font-weight:normal;color:#000;font-family:'Liberation Sans',sans-serif;transform:scaleY(1.1);transform-origin:0 11px;">Obs Acerto</div>
<div class="f" style="left:66px;top:500px;width:64px;height:26px;"></div>
<div class="f" style="left:130px;top:500px;width:63px;height:26px;"></div>
<div class="f" style="left:193px;top:500px;width:63px;height:26px;"></div>
<div class="f" style="left:256px;top:500px;width:64px;height:26px;"></div>
<div class="f" style="left:320px;top:500px;width:70px;height:26px;"></div>
<div class="f" style="left:390px;top:500px;width:323px;height:26px;"></div>
<div class="f" style="left:713px;top:500px;width:112px;height:26px;"></div>
<div class="f" style="left:825px;top:500px;width:71px;height:26px;"></div>
<div class="f" style="left:896px;top:500px;width:340px;height:26px;"></div>
<div class="f" style="left:66px;top:526px;width:64px;height:27px;"></div>
<div class="f" style="left:130px;top:526px;width:63px;height:27px;"></div>
<div class="f" style="left:193px;top:526px;width:63px;height:27px;"></div>
<div class="f" style="left:256px;top:526px;width:64px;height:27px;"></div>
<div class="f" style="left:320px;top:526px;width:70px;height:27px;"></div>
<div class="f" style="left:390px;top:526px;width:323px;height:27px;"></div>
<div class="f" style="left:713px;top:526px;width:112px;height:27px;"></div>
<div class="f" style="left:825px;top:526px;width:71px;height:27px;"></div>
<div class="f" style="left:896px;top:526px;width:340px;height:27px;"></div>
<div class="f" style="left:66px;top:553px;width:64px;height:27px;"></div>
<div class="f" style="left:130px;top:553px;width:63px;height:27px;"></div>
<div class="f" style="left:193px;top:553px;width:63px;height:27px;"></div>
<div class="f" style="left:256px;top:553px;width:64px;height:27px;"></div>
<div class="f" style="left:320px;top:553px;width:70px;height:27px;"></div>
<div class="f" style="left:390px;top:553px;width:323px;height:27px;"></div>
<div class="f" style="left:713px;top:553px;width:112px;height:27px;"></div>
<div class="f" style="left:825px;top:553px;width:71px;height:27px;"></div>
<div class="f" style="left:896px;top:553px;width:340px;height:27px;"></div>
<svg style="position:absolute;left:40px;top:499px" width="16" height="80" viewBox="0 0 16 80">
<rect x="1.5" y="1.5" width="13" height="77" rx="6.5" fill="#e6ebf4" stroke="#ffffff" stroke-width="1"/>
<rect x="0.5" y="0.5" width="15" height="79" rx="7.5" fill="none" stroke="#c9d6ea" stroke-width="1"/>
<rect x="2" y="15" width="12" height="1" fill="#6a7090"/>
<rect x="2" y="63" width="12" height="1" fill="#9098b0"/>
<polygon points="8,7 11.5,11 4.5,11" fill="#646a84"/>
<polygon points="8,73 11.5,69 4.5,69" fill="#646a84"/>
<rect x="9" y="38" width="1" height="1" fill="#7080a0"/><rect x="10" y="37" width="1" height="1" fill="#7080a0"/>
<rect x="4" y="42" width="1" height="1" fill="#7080a0"/><rect x="5" y="41" width="1" height="1" fill="#7080a0"/>
<rect x="9" y="46" width="1" height="1" fill="#7080a0"/><rect x="10" y="45" width="1" height="1" fill="#7080a0"/>
</svg>
<div class="t" style="right:1300px;top:607px;font-size:13px;line-height:13px;font-weight:normal;color:#000;font-family:'Liberation Sans',sans-serif;transform:scaleY(1.1);transform-origin:0 11px;">Descricao Filial</div>
<div class="t" style="right:1300px;top:634px;font-size:13px;line-height:13px;font-weight:normal;color:#000;font-family:'Liberation Sans',sans-serif;transform:scaleY(1.1);transform-origin:0 11px;">Seção</div>
<div class="f" style="left:132px;top:599px;width:541px;height:26px;"></div>
<div class="f" style="left:132px;top:625px;width:541px;height:26px;"></div>
<div class="t" style="left:583.0px;width:400px;text-align:center;top:599px;font-size:13px;line-height:13px;font-weight:bold;color:#000;font-family:'Liberation Sans',sans-serif;transform:scaleY(1.1);transform-origin:0 11px;letter-spacing:0.25px;">Valor Total Despesas</div>
<div class="f" style="left:708px;top:615px;width:125px;height:26px;"></div>
<div class="t" style="left:752.0px;width:400px;text-align:center;top:599px;font-size:13px;line-height:13px;font-weight:bold;color:#000;font-family:'Liberation Sans',sans-serif;transform:scaleY(1.1);transform-origin:0 11px;letter-spacing:0.25px;">Vlr Receber</div>
<div class="f" style="left:878px;top:615px;width:125px;height:26px;"></div>
<div class="t" style="left:921.0px;width:400px;text-align:center;top:599px;font-size:13px;line-height:13px;font-weight:bold;color:#000;font-family:'Liberation Sans',sans-serif;transform:scaleY(1.1);transform-origin:0 11px;letter-spacing:0.25px;">Vlr Restituir</div>
<div class="f" style="left:1048px;top:615px;width:125px;height:26px;"></div>
<div class="t" style="left:1124.0px;width:400px;text-align:center;top:599px;font-size:13px;line-height:13px;font-weight:normal;color:#000;font-family:'Liberation Sans',sans-serif;transform:scaleY(1.1);transform-origin:0 11px;">Data Pagamento</div>
<div class="f" style="left:1262px;top:615px;width:113px;height:26px;"></div>
<div class="t" style="right:1190px;top:677px;font-size:13px;line-height:13px;font-weight:normal;color:#000;font-family:'Liberation Sans',sans-serif;transform:scaleY(1.1);transform-origin:0 11px;letter-spacing:-0.22px">Aprovacao Colaborador</div>
<div class="t" style="right:1190px;top:704px;font-size:13px;line-height:13px;font-weight:normal;color:#000;font-family:'Liberation Sans',sans-serif;transform:scaleY(1.1);transform-origin:0 11px;letter-spacing:-0.15px">Aprovacao Superior</div>
<div class="t" style="right:1190px;top:730px;font-size:13px;line-height:13px;font-weight:bold;color:#000;font-family:'Liberation Sans',sans-serif;transform:scaleY(1.1);transform-origin:0 11px;letter-spacing:0.25px;letter-spacing:0.1px">Gestor Caixa</div>
<div class="f" style="left:242px;top:669px;width:189px;height:26px;"></div>
<div class="f" style="left:431px;top:669px;width:176px;height:26px;"></div>
<div class="f" style="left:607px;top:669px;width:334px;height:26px;"></div>
<div class="f" style="left:242px;top:695px;width:189px;height:26px;"></div>
<div class="f" style="left:431px;top:695px;width:176px;height:26px;"></div>
<div class="f" style="left:607px;top:695px;width:334px;height:26px;"></div>
<div class="f" style="left:242px;top:721px;width:189px;height:26px;"></div>
<div class="f" style="left:431px;top:721px;width:176px;height:26px;"></div>
<div class="f" style="left:607px;top:721px;width:334px;height:26px;"></div>
<div class="sb" style="left:942px;top:669px;width:37px;height:25px"></div>
<svg style="position:absolute;left:942px;top:669px" width="37" height="25" viewBox="0 0 37 25"><rect x="2" y="2" width="33" height="20" fill="#e0e0e0"/><path d="M14.6,14.6 L25.2,3" stroke="#b8b8b8" stroke-width="1" fill="none"/><path d="M8,7.6 L13.2,13.4 L24,2.4" stroke="#a0a0a0" stroke-width="3.8" fill="none"/></svg>
<div class="sb" style="left:942px;top:695px;width:37px;height:25px"></div>
<svg style="position:absolute;left:942px;top:695px" width="37" height="25" viewBox="0 0 37 25"><rect x="2" y="2" width="33" height="20" fill="#e0e0e0"/><path d="M14.6,14.6 L25.2,3" stroke="#b8b8b8" stroke-width="1" fill="none"/><path d="M8,7.6 L13.2,13.4 L24,2.4" stroke="#a0a0a0" stroke-width="3.8" fill="none"/></svg>
<div class="sb" style="left:942px;top:722px;width:37px;height:25px"></div>
<svg style="position:absolute;left:942px;top:722px" width="37" height="25" viewBox="0 0 37 25"><rect x="2" y="2" width="33" height="20" fill="#e0e0e0"/><path d="M14.6,14.6 L25.2,3" stroke="#b8b8b8" stroke-width="1" fill="none"/><path d="M8,7.6 L13.2,13.4 L24,2.4" stroke="#a0a0a0" stroke-width="3.8" fill="none"/></svg>
<div class="sb" style="left:981px;top:669px;width:36px;height:25px"></div>
<svg style="position:absolute;left:981px;top:669px" width="36" height="25" viewBox="0 0 36 25"><rect x="8" y="3" width="19" height="19" fill="#e0e0e0"/><rect x="27" y="2" width="7" height="21" fill="#c0c0c0"/><polygon points="11,5 14.5,4 18.5,9.5 26.7,3 26.7,8 22,14.5 26.7,20 26.7,21.8 20.5,21.8 17.5,18 14,21.8 9.5,21.8 15.5,14.5" fill="#a0a0a0"/><path d="M15.2,5 L18.3,9.8 M26.5,8.5 L22,14.5 L26.5,20 M17.8,18.5 L14.5,21.8" stroke="#6e6e6e" stroke-width="0.9" fill="none"/></svg>
<div class="sb" style="left:981px;top:695px;width:36px;height:25px"></div>
<svg style="position:absolute;left:981px;top:695px" width="36" height="25" viewBox="0 0 36 25"><rect x="8" y="3" width="19" height="19" fill="#e0e0e0"/><rect x="27" y="2" width="7" height="21" fill="#c0c0c0"/><polygon points="11,5 14.5,4 18.5,9.5 26.7,3 26.7,8 22,14.5 26.7,20 26.7,21.8 20.5,21.8 17.5,18 14,21.8 9.5,21.8 15.5,14.5" fill="#a0a0a0"/><path d="M15.2,5 L18.3,9.8 M26.5,8.5 L22,14.5 L26.5,20 M17.8,18.5 L14.5,21.8" stroke="#6e6e6e" stroke-width="0.9" fill="none"/></svg>
<div class="sb" style="left:1019px;top:695px;width:36px;height:25px"></div>
<svg style="position:absolute;left:1019px;top:695px" width="36" height="25" viewBox="0 0 36 25"><polygon points="9,4 14,3.3 16.5,9 24.7,2 26.7,4.5 20.3,12.5 25.5,19.5 23,20.8 18,20.8 16.5,18.5 13,20.8 8,20.8 13,13.5" fill="#e2e2e2"/><path d="M14.3,4.2 L16.6,9 M26.7,5 L20.4,13 L25.8,19.5 M16.7,18.4 L13.6,20.8" stroke="#6a6a6a" stroke-width="0.9" fill="none"/></svg>
<div class="sb" style="left:1019px;top:722px;width:36px;height:25px"></div>
<svg style="position:absolute;left:1019px;top:722px" width="36" height="25" viewBox="0 0 36 25"><polygon points="9,4 14,3.3 16.5,9 24.7,2 26.7,4.5 20.3,12.5 25.5,19.5 23,20.8 18,20.8 16.5,18.5 13,20.8 8,20.8 13,13.5" fill="#e2e2e2"/><path d="M14.3,4.2 L16.6,9 M26.7,5 L20.4,13 L25.8,19.5 M16.7,18.4 L13.6,20.8" stroke="#6a6a6a" stroke-width="0.9" fill="none"/></svg>
<div class="tab" style="left:5px;width:144px;background:#ccd9ea;color:#333"><div style="position:absolute;left:0;right:0;top:6px;transform:scaleY(1.1);transform-origin:0 11px">Solicitacao Numerario</div></div>
<div class="tab" style="left:151px;width:141px;background:#94b6da;color:#000"><div style="position:absolute;left:0;right:0;top:6px;transform:scaleY(1.1);transform-origin:0 11px">Acerto Numerario</div></div>
<div class="tab" style="left:294px;width:140px;background:#ccd9ea;color:#333"><div style="position:absolute;left:0;right:0;top:6px;transform:scaleY(1.1);transform-origin:0 11px">Reembolso Numerario</div></div>
<div class="tab" style="left:437px;width:141px;background:#ccd9ea;color:#333"><div style="position:absolute;left:0;right:0;top:6px;transform:scaleY(1.1);transform-origin:0 11px">Conta Corrente</div></div>
<div class="tab" style="left:580px;width:141px;background:#ccd9ea;color:#333"><div style="position:absolute;left:0;right:0;top:6px;transform:scaleY(1.1);transform-origin:0 11px">Cadastros</div></div>
<div class="tab" style="left:723px;width:141px;background:#ccd9ea;color:#333"><div style="position:absolute;left:0;right:0;top:6px;transform:scaleY(1.1);transform-origin:0 11px">Consulta</div></div>
<div class="tab" style="left:866px;width:140px;background:#ccd9ea;color:#333"><div style="position:absolute;left:0;right:0;top:6px;transform:scaleY(1.1);transform-origin:0 11px">Gerenciamento</div></div>
<div class="tab" style="left:1009px;width:140px;background:#ccd9ea;color:#333"><div style="position:absolute;left:0;right:0;top:6px;transform:scaleY(1.1);transform-origin:0 11px">Relatorios</div></div>
<svg style="position:absolute;left:0;top:0" width="1425" height="841">
<g fill="none" stroke="#f00" stroke-width="4">
<rect x="183" y="142" width="848" height="328" rx="3"/>
<rect x="226" y="49" width="66" height="32" rx="2"/>
<line x1="258" y1="49" x2="258" y2="81"/>
<rect x="151.2" y="783.5" width="141" height="25" rx="2"/>
</g>
<g stroke="#f00" stroke-width="6.2" stroke-linecap="round">
<line x1="178.2" y1="100.4" x2="212" y2="86"/>
<line x1="362.8" y1="100.8" x2="318" y2="85"/>
<line x1="81.8" y1="192.5" x2="160" y2="192.5"/>
</g>
<g fill="#f00">
<polygon points="228,78 199.5,81.5 206.5,97.5"/>
<polygon points="293.5,76.8 322.5,77.2 315.5,93.5"/>
<polygon points="182,192.3 154.5,183.5 154.5,201.5"/>
</g>
<g fill="none" stroke="#f00" stroke-width="2">
<path d="M143.6,108 L148.3,104.8 L148.3,121.5 M142.5,121 L153,121"/>
<path d="M46.6,188.5 Q48,185.9 51.3,185.9 Q55.3,186 55.3,190 Q55.3,193 51.5,196.5 L46.8,201.3 L56.3,201.3"/>
<path d="M378.4,103.3 Q380.5,101.9 383.2,101.9 Q388,102 388,106 Q388,109.8 383.2,110.2 Q388.8,110.5 388.8,114.5 Q388.8,118.6 383.2,118.6 Q380,118.6 377.8,117"/>
</g>
<g fill="none" stroke="#f00" stroke-width="1.7">
<ellipse cx="160" cy="108.6" rx="3.6" ry="3.6"/>
<ellipse cx="64" cy="189.8" rx="3.6" ry="3.8"/>
<ellipse cx="396.1" cy="105.6" rx="3.5" ry="3.5"/>
</g>
<g fill="#f00">
<rect x="156" y="115.7" width="8.4" height="1.6"/>
<rect x="60" y="196.7" width="8.4" height="1.5"/>
<rect x="392" y="113.6" width="8.4" height="1.5"/>
</g>
</svg></body></html>
